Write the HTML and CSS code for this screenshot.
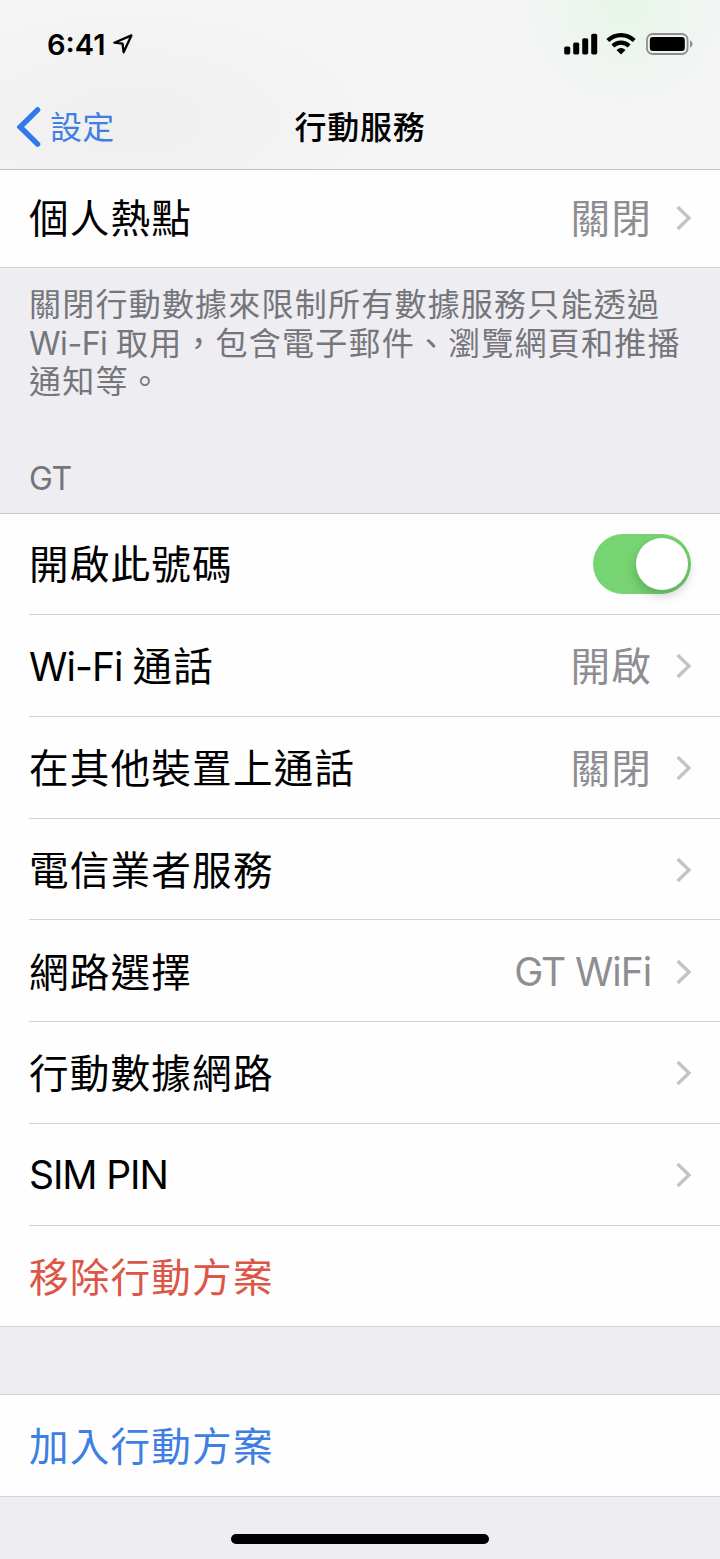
FILE: index.html
```html
<!DOCTYPE html>
<html lang="zh-Hant">
<head>
<meta charset="utf-8">
<title>行動服務</title>
<link rel="stylesheet" href="styles.css">
</head>
<body>
<svg class="defs" aria-hidden="true"><symbol id="chev" viewBox="0 0 18 28"><path d="M2.6 3L14 14 2.6 25" fill="none" stroke="#c4c4c8" stroke-width="3.4"/></symbol></svg>
<div class="screen">
  <header class="header">
    <div class="status">
      <div class="time"><span>6:41</span>
        <svg class="location" width="20" height="20" viewBox="0 0 20 20"><path d="M1.4 8.7L18.4 1.4 10.6 18.2 9.5 9.6z" fill="none" stroke="#000" stroke-width="2.3" stroke-linejoin="round"/></svg>
      </div>
      <div class="indicators">
        <svg width="34" height="22" viewBox="0 0 34 22"><rect x="0.2" y="13.6" width="6" height="7.8" rx="1.6"/><rect x="9.2" y="9.6" width="6" height="11.8" rx="1.6"/><rect x="18.2" y="5.2" width="6" height="16.2" rx="1.6"/><rect x="27.2" y="0.8" width="6" height="20.6" rx="1.6"/></svg>
        <svg class="wifi" width="30" height="22" viewBox="0 0 30 22"><g fill="none" stroke="#000" stroke-width="4.2"><path d="M1.8 7.6a18.8 18.8 0 0 1 26.4 0"/><path d="M6.9 13a11.5 11.5 0 0 1 16.2 0"/></g><path d="M15 21.6l-4.5-4.6q4.5-3.8 9 0z"/></svg>
        <svg class="battery" width="48" height="22" viewBox="0 0 48 22"><rect x="1" y="1" width="40.6" height="20" rx="5.6" fill="none" stroke="#8c908d" stroke-width="1.8"/><rect x="3.8" y="3.9" width="35" height="14.2" rx="3"/><path d="M44 7.5c3.4 1.2 3.4 5.8 0 7z" fill="#8c908d"/></svg>
      </div>
    </div>
    <nav class="nav">
      <a class="back"><svg width="24" height="40" viewBox="0 0 24 40"><path d="M20.6 2.8L3.2 20l17.4 17.2" fill="none" stroke="#3478e8" stroke-width="5.4" stroke-linecap="round" stroke-linejoin="miter"/></svg><span>設定</span></a>
      <h1 class="title">行動服務</h1>
    </nav>
  </header>
  <section class="list hotspot">
    <div class="row"><span class="label">個人熱點</span><span class="value">關閉</span><svg class="chevron"><use href="#chev"/></svg></div>
  </section>
  <p class="note">關閉行動數據來限制所有數據服務只能透過<br><span class="latin">Wi-Fi </span>取用，包含電子郵件、瀏覽網頁和推播<br>通知等。</p>
  <h2 class="group">GT</h2>
  <section class="list plan">
    <div class="row first"><span class="label">開啟此號碼</span><span class="toggle"><span class="knob"></span></span></div>
    <div class="row"><span class="label"><span class="latin">Wi-Fi </span>通話</span><span class="value">開啟</span><svg class="chevron"><use href="#chev"/></svg></div>
    <div class="row"><span class="label">在其他裝置上通話</span><span class="value">關閉</span><svg class="chevron"><use href="#chev"/></svg></div>
    <div class="row"><span class="label">電信業者服務</span><svg class="chevron"><use href="#chev"/></svg></div>
    <div class="row"><span class="label">網路選擇</span><span class="value latin">GT WiFi</span><svg class="chevron"><use href="#chev"/></svg></div>
    <div class="row"><span class="label">行動數據網路</span><svg class="chevron"><use href="#chev"/></svg></div>
    <div class="row"><span class="label latin">SIM PIN</span><svg class="chevron"><use href="#chev"/></svg></div>
    <div class="row"><span class="label remove">移除行動方案</span></div>
  </section>
  <section class="list add">
    <div class="row"><span class="label link">加入行動方案</span></div>
  </section>
  <footer class="bottom"><div class="home"></div></footer>
</div>
</body>
</html>
```

FILE: styles.css
```css
* { box-sizing: border-box; }
body { margin: 0; background: #ededf2; font-family: Inter, "Noto Sans CJK TC", sans-serif; color: #000; }
.defs { display: block; width: 0; height: 0; }
.screen { width: 720px; height: 1559px; display: flex; flex-direction: column; overflow: hidden; }

.header {
  height: 170px; flex: none; border-bottom: 1px solid #c4c4c6;
  background: radial-gradient(ellipse 110px 110px at 625px 5px, #e7f5e8, rgba(231, 245, 232, 0)), radial-gradient(ellipse 260px 120px at 130px 120px, #efefef, rgba(239, 239, 239, 0)), #f5f5f6;
}
.status { height: 88px; display: flex; justify-content: space-between; padding: 0 28px 0 47px; align-items: center; }
.time { display: flex; align-items: center; gap: 8px; font-size: 29px; line-height: 36px; font-weight: 600; letter-spacing: 0; }
.time span { padding-top: 1px; }
.indicators { display: flex; align-items: center; }
.wifi { margin-left: 8px; }
.battery { margin-left: 10px; margin-right: -2px; }
.nav { height: 78px; display: grid; grid-template-columns: 1fr auto 1fr; align-items: center; }
.back { display: flex; align-items: center; gap: 9px; padding-left: 17px; color: #3f7fe4; font-size: 32px; line-height: 40px; letter-spacing: 0.3px; }
.back span { padding-top: 2px; }
.title { margin: 0; padding-top: 2px; font-size: 32px; line-height: 40px; font-weight: 500; letter-spacing: 0.8px; }

.list { flex: none; background: #fefefe; padding-left: 29px; border-bottom: 1px solid #d3d3d8; }
.row { height: 101.75px; display: flex; align-items: center; padding-right: 27px; border-bottom: 1px solid #d3d3d6; font-size: 39.6px; letter-spacing: 1.2px; line-height: 56px; white-space: nowrap; }
.row:last-child { border-bottom: 0; }
.label { flex: 1; padding-top: 2px; }
.value { color: #8e8e92; padding-top: 2px; }
.chevron { width: 18px; height: 28px; margin-left: 23px; flex: none; }
.latin { letter-spacing: -0.95px; font-size: 39px; }
.label.latin, .value.latin { padding-top: 0; letter-spacing: -1.1px; }
.value.latin { margin-right: 1px; }
.remove { color: #dc5647; }
.link { color: #3f7fe4; }

.hotspot { height: 98px; }
.hotspot .row { height: 96px; }
.note { margin: 0; flex: none; height: 178px; padding: 18px 0 0 29px; font-size: 32px; line-height: 38.5px; letter-spacing: 1.22px; color: #75757a; white-space: nowrap; }
.note .latin { letter-spacing: -0.45px; font-size: 32px; }
.group { margin: 0; flex: none; height: 67px; padding: 14px 0 0 29px; font-size: 32px; line-height: 38px; font-weight: 400; letter-spacing: -0.4px; color: #75757a; }
.plan { height: 814px; border-top: 1px solid #c8c8cc; }
.plan .row + .row { padding-top: 2px; }
.row.first { height: 101px; }
.plan .row:last-child { height: 101px; }
.add { height: 103px; margin-top: 67px; border-top: 1px solid #d3d3d8; }
.add .row { height: 101px; }

.toggle { width: 98px; height: 60px; border-radius: 30px; background: #76d572; display: flex; justify-content: flex-end; align-items: center; padding-right: 3px; margin-right: 2px; }
.knob { width: 52px; height: 52px; border-radius: 50%; background: #fff; box-shadow: 0 5px 12px rgba(0, 0, 0, 0.22); }

.bottom { flex: 1; display: flex; justify-content: center; padding-top: 37px; }
.home { width: 258px; height: 10px; border-radius: 5px; background: #000; }
```
